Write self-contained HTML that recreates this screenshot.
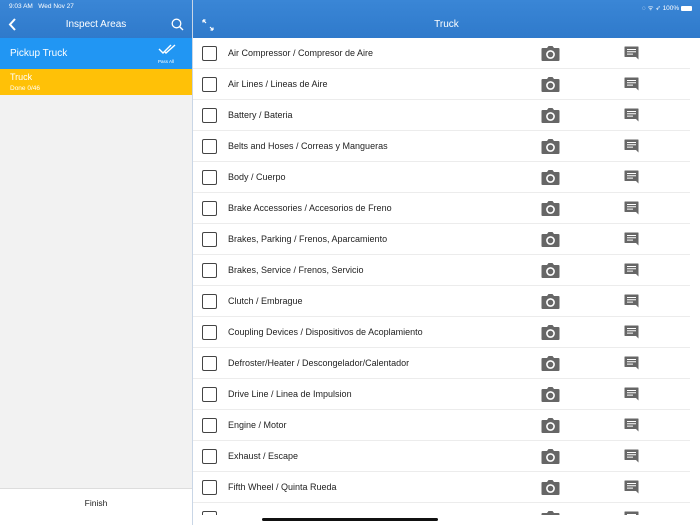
<!DOCTYPE html>
<html style="width:700px;height:525px;overflow:hidden"><head><style>
*{margin:0;padding:0;box-sizing:border-box}
body{width:700px;height:525px;overflow:hidden;font-family:"Liberation Sans",sans-serif;background:#fff;position:relative}
.hdr{position:absolute;left:0;top:0;width:700px;height:38px;background:linear-gradient(#3a86d6,#2f7acb)}
.sb{position:absolute;top:3px;font-size:6.5px;color:#fff}
.left{position:absolute;left:0;top:38px;width:192px;height:487px;background:#f2f2f2}
.div{position:absolute;left:192px;top:0;width:1px;height:525px;background:#c9d6e6}
.row{position:absolute;left:193px;width:497px;height:31px;border-bottom:1px solid #ececec}
.cb{position:absolute;left:9px;top:8px;width:15px;height:15px;border:1.5px solid #444;border-radius:2px}
.tx{position:absolute;left:35px;top:10px;font-size:9px;color:#222}
.cam{position:absolute;left:348px;top:7px}
.cm{position:absolute;left:431px;top:8px}
#rows{position:absolute;left:0;top:0;width:700px;height:515px;overflow:hidden}
</style></head><body>
<div class="hdr">
<div class="sb" style="left:9px">9:03 AM &nbsp; Wed Nov 27</div>
<div class="sb" style="right:8px">◌ ᯤ ➶ 100% <span style="display:inline-block;width:11px;height:5px;background:#fff;border-radius:1px;vertical-align:middle"></span></div>
<svg style="position:absolute;left:8px;top:18px" width="10" height="13"><path d="M7 1 L2 6.5 L7 12" stroke="#fff" stroke-width="2" fill="none"/></svg>
<div style="position:absolute;left:0;width:192px;top:19px;text-align:center;color:#fff;font-size:10px">Inspect Areas</div>
<svg style="position:absolute;left:171px;top:18px" width="13" height="13"><circle cx="5.5" cy="5.5" r="4.3" stroke="#fff" stroke-width="1.3" fill="none"/><path d="M8.7 8.7 L12 12" stroke="#fff" stroke-width="1.4"/></svg>
<svg style="position:absolute;left:202px;top:19px" width="12" height="12"><path d="M1 1 L4 4 M1 1 L1 3.5 M1 1 L3.5 1 M11 11 L8 8 M11 11 L11 8.5 M11 11 L8.5 11" stroke="#fff" stroke-width="1.2" fill="none"/></svg>
<div style="position:absolute;left:193px;width:507px;top:19px;text-align:center;color:#fff;font-size:10px">Truck</div>
</div>
<div class="left">
<div style="position:absolute;top:0;width:192px;height:31px;background:#2196f3;color:#fff">
<div style="position:absolute;left:10px;top:10px;font-size:10px">Pickup Truck</div>
<svg style="position:absolute;left:158px;top:5px" width="19" height="12"><path d="M1 6 L5 10 L13 2 M7 9 L8 10 L17 2" stroke="#fff" stroke-width="1.4" fill="none"/></svg>
<div style="position:absolute;left:158px;top:21px;font-size:4.5px">Pass All</div>
</div>
<div style="position:absolute;top:31px;width:192px;height:26px;background:#ffc107;color:#fff">
<div style="position:absolute;left:10px;top:3px;font-size:9px">Truck</div>
<div style="position:absolute;left:10px;top:16px;font-size:6.5px">Done 0/46</div>
</div>
<div style="position:absolute;top:450px;width:192px;height:37px;background:#fff;border-top:1px solid #ddd;text-align:center;font-size:8.5px;padding-top:9px;color:#222">Finish</div>
</div>
<div class="div"></div>
<div id="rows"></div>
<div style="position:absolute;left:262px;top:518px;width:176px;height:3px;background:#111;border-radius:2px"></div>
<script>
var t=["Air Compressor / Compresor de Aire","Air Lines / Lineas de Aire","Battery / Bateria","Belts and Hoses / Correas y Mangueras","Body / Cuerpo","Brake Accessories / Accesorios de Freno","Brakes, Parking / Frenos, Aparcamiento","Brakes, Service / Frenos, Servicio","Clutch / Embrague","Coupling Devices / Dispositivos de Acoplamiento","Defroster/Heater / Descongelador/Calentador","Drive Line / Linea de Impulsion","Engine / Motor","Exhaust / Escape","Fifth Wheel / Quinta Rueda",""];
var cam='<svg width="19" height="16"><path d="M6 3 L7.5 1 H11.5 L13 3 H17.5 Q18.5 3 18.5 4 V15 Q18.5 16 17.5 16 H1.5 Q0.5 16 0.5 15 V4 Q0.5 3 1.5 3 Z" fill="#666"/><circle cx="9.5" cy="9.5" r="3.6" fill="none" stroke="#fff" stroke-width="1.6"/></svg>';
var cm='<svg width="15" height="14"><path d="M1 0.5 H14 Q14.5 0.5 14.5 1 V13.5 L12 11 H1 Q0.5 11 0.5 10.5 V1 Q0.5 0.5 1 0.5Z" fill="#666"/><path d="M3 3.5 H12 M3 5.8 H12 M3 8.1 H9" stroke="#fff" stroke-width="1"/></svg>';
var h="";for(var i=0;i<16;i++){h+='<div class="row" style="top:'+(38+31*i)+'px"><div class="cb"></div><div class="tx">'+t[i]+'</div><div class="cam">'+cam+'</div><div class="cm">'+cm+'</div></div>';}
document.getElementById("rows").innerHTML=h;
</script>
</body></html>
